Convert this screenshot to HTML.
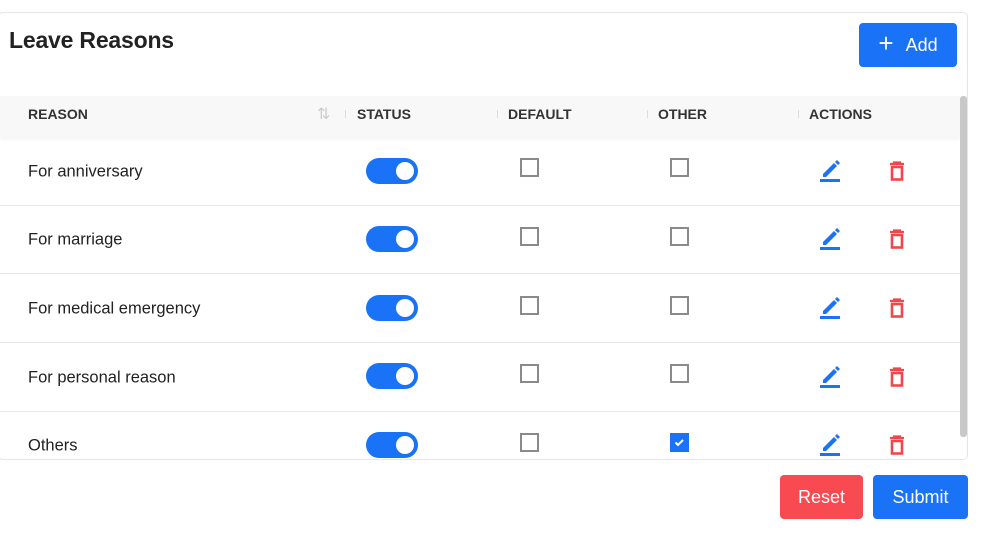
<!DOCTYPE html>
<html><head><style>
*{box-sizing:border-box;margin:0;padding:0}
body{width:997px;height:547px;background:#fff;font-family:"Liberation Sans",sans-serif;color:#222;position:relative;overflow:hidden}
h1{position:absolute;left:9px;top:27px;font-size:23px;font-weight:bold;color:#222;letter-spacing:-0.2px}
.btn{position:absolute;border-radius:4px;color:#fff;font-size:18px;display:flex;align-items:center;justify-content:center}
.thead{position:absolute;left:0;top:96px;width:960px;height:41px;background:#f8f8f8;box-shadow:0 2px 4px rgba(0,0,0,0.05)}
.th{position:absolute;top:114px;font-size:14px;font-weight:bold;color:#333;transform:translateY(-50%)}
.sep{position:absolute;top:110px;width:1px;height:8px;background:#ddd}
.row{position:absolute;left:0;width:960px;border-bottom:1px solid #e8e8e8}
.txt{position:absolute;left:28px;font-size:16.5px;color:#222;transform:translateY(-50%);margin-top:2px}
.tog{position:absolute;left:366px;width:52px;height:26px;border-radius:13px;background:#1a73f6}
.tog::after{content:"";position:absolute;right:4px;top:4px;width:18px;height:18px;border-radius:50%;background:#fff}
.cb{position:absolute;width:19px;height:19px;border:2px solid #8a8a8a;background:#fff}
.cbon{background:#1a73f6;border-color:#1a73f6}
.ic{position:absolute}
.scroll{position:absolute;left:960px;top:96px;width:7px;height:341px;background:#c8c8c8;border-radius:3px}
</style></head><body>
<h1>Leave Reasons</h1>
<div class="btn" style="left:859px;top:23px;width:98px;height:44px;background:#1a73f6"><span style="font-size:26px;font-weight:300;margin-right:12px;margin-top:-3px">+</span>Add</div>
<div class="thead"></div>
<div class="scroll"></div>
<div class="th" style="left:28px">REASON</div>
<div class="th" style="left:317px;color:#ccc;font-weight:normal;font-size:16px">⇅</div>
<div class="sep" style="left:345px"></div>
<div class="th" style="left:357px">STATUS</div>
<div class="sep" style="left:497px"></div>
<div class="th" style="left:508px">DEFAULT</div>
<div class="sep" style="left:647px"></div>
<div class="th" style="left:658px">OTHER</div>
<div class="sep" style="left:798px"></div>
<div class="th" style="left:809px">ACTIONS</div>

<div class="row" style="top:137px;height:69px"></div>
<div class="row" style="top:206px;height:68px"></div>
<div class="row" style="top:274px;height:69px"></div>
<div class="row" style="top:343px;height:69px"></div>

<div class="txt" style="top:170px">For anniversary</div>
<div class="txt" style="top:238px">For marriage</div>
<div class="txt" style="top:307px">For medical emergency</div>
<div class="txt" style="top:376px">For personal reason</div>
<div class="txt" style="top:444px">Others</div>

<div class="tog" style="top:158px"></div>
<div class="tog" style="top:226px"></div>
<div class="tog" style="top:295px"></div>
<div class="tog" style="top:363px"></div>
<div class="tog" style="top:432px"></div>

<div class="cb" style="left:520px;top:158px"></div>
<div class="cb" style="left:520px;top:227px"></div>
<div class="cb" style="left:520px;top:296px"></div>
<div class="cb" style="left:520px;top:364px"></div>
<div class="cb" style="left:520px;top:433px"></div>
<div class="cb" style="left:670px;top:158px"></div>
<div class="cb" style="left:670px;top:227px"></div>
<div class="cb" style="left:670px;top:296px"></div>
<div class="cb" style="left:670px;top:364px"></div>
<div class="cb cbon" style="left:670px;top:433px"><svg width="15" height="15" viewBox="0 0 15 15" style="position:absolute;left:0;top:0"><path d="M3.5 7.5l2.5 2.5 5-5" stroke="#fff" stroke-width="2" fill="none"/></svg></div>

<svg class="ic" style="left:820px;top:158px" width="21" height="25" viewBox="0 0 21 25"><path d="M3 16l11-11 3 3-11 11H3z M15 4l2-2 3 3-2 2z" fill="#1a73f6"/><rect x="0" y="21" width="20" height="3" fill="#1a73f6"/></svg>
<svg class="ic" style="left:820px;top:226px" width="21" height="25" viewBox="0 0 21 25"><path d="M3 16l11-11 3 3-11 11H3z M15 4l2-2 3 3-2 2z" fill="#1a73f6"/><rect x="0" y="21" width="20" height="3" fill="#1a73f6"/></svg>
<svg class="ic" style="left:820px;top:295px" width="21" height="25" viewBox="0 0 21 25"><path d="M3 16l11-11 3 3-11 11H3z M15 4l2-2 3 3-2 2z" fill="#1a73f6"/><rect x="0" y="21" width="20" height="3" fill="#1a73f6"/></svg>
<svg class="ic" style="left:820px;top:364px" width="21" height="25" viewBox="0 0 21 25"><path d="M3 16l11-11 3 3-11 11H3z M15 4l2-2 3 3-2 2z" fill="#1a73f6"/><rect x="0" y="21" width="20" height="3" fill="#1a73f6"/></svg>
<svg class="ic" style="left:820px;top:432px" width="21" height="25" viewBox="0 0 21 25"><path d="M3 16l11-11 3 3-11 11H3z M15 4l2-2 3 3-2 2z" fill="#1a73f6"/><rect x="0" y="21" width="20" height="3" fill="#1a73f6"/></svg>

<svg class="ic" style="left:889px;top:161px" width="16" height="20" viewBox="0 0 16 20"><path d="M1 3h14M5 3V1.5h6V3" stroke="#f0474d" stroke-width="2.2" fill="none"/><rect x="3" y="6" width="10" height="12.5" stroke="#f0474d" stroke-width="2.6" fill="none"/></svg>
<svg class="ic" style="left:889px;top:229px" width="16" height="20" viewBox="0 0 16 20"><path d="M1 3h14M5 3V1.5h6V3" stroke="#f0474d" stroke-width="2.2" fill="none"/><rect x="3" y="6" width="10" height="12.5" stroke="#f0474d" stroke-width="2.6" fill="none"/></svg>
<svg class="ic" style="left:889px;top:298px" width="16" height="20" viewBox="0 0 16 20"><path d="M1 3h14M5 3V1.5h6V3" stroke="#f0474d" stroke-width="2.2" fill="none"/><rect x="3" y="6" width="10" height="12.5" stroke="#f0474d" stroke-width="2.6" fill="none"/></svg>
<svg class="ic" style="left:889px;top:367px" width="16" height="20" viewBox="0 0 16 20"><path d="M1 3h14M5 3V1.5h6V3" stroke="#f0474d" stroke-width="2.2" fill="none"/><rect x="3" y="6" width="10" height="12.5" stroke="#f0474d" stroke-width="2.6" fill="none"/></svg>
<svg class="ic" style="left:889px;top:435px" width="16" height="20" viewBox="0 0 16 20"><path d="M1 3h14M5 3V1.5h6V3" stroke="#f0474d" stroke-width="2.2" fill="none"/><rect x="3" y="6" width="10" height="12.5" stroke="#f0474d" stroke-width="2.6" fill="none"/></svg>

<div style="position:absolute;left:0;top:460px;width:997px;height:87px;background:#fff"></div>
<div style="position:absolute;left:-2px;top:12px;width:970px;height:448px;border:1px solid #e4e6ea;border-radius:5px;pointer-events:none"></div>

<div class="btn" style="left:780px;top:475px;width:83px;height:44px;background:#f84a50">Reset</div>
<div class="btn" style="left:873px;top:475px;width:95px;height:44px;background:#1a73f6">Submit</div>
</body></html>
